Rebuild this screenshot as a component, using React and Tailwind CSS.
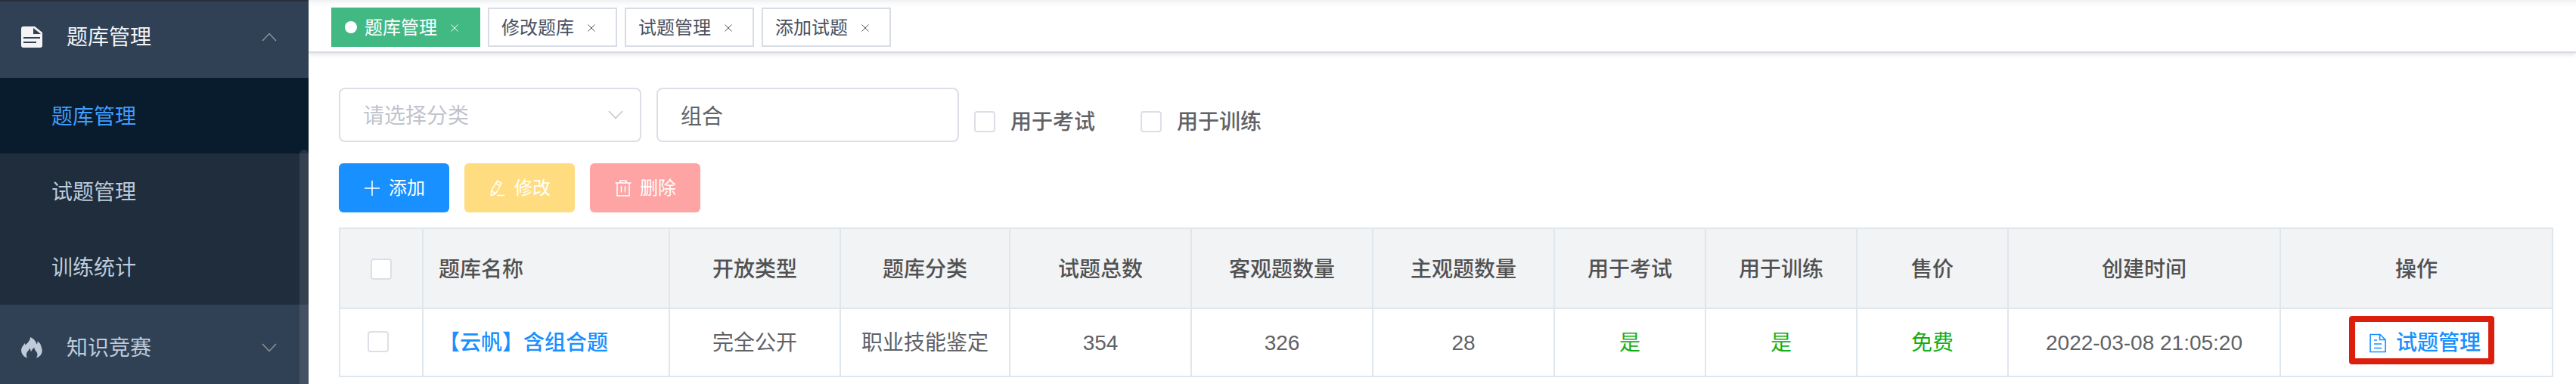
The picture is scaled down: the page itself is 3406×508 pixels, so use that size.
import { useState } from 'react';

const subMenus = ['题库管理', '试题管理', '训练统计'];

const tags = ['题库管理', '修改题库', '试题管理', '添加试题'];

const columns = [
    { title: '开放类型', key: 'openType', col: 'w-[226px]' },
    { title: '题库分类', key: 'category', col: 'w-[224px]' },
    { title: '试题总数', key: 'total', col: 'w-[240px]' },
    { title: '客观题数量', key: 'objective', col: 'w-[240px]' },
    { title: '主观题数量', key: 'subjective', col: 'w-[240px]' },
    { title: '用于考试', key: 'isExam', col: 'w-[200px]', green: true },
    { title: '用于训练', key: 'isTrain', col: 'w-[200px]', green: true },
    { title: '售价', key: 'price', col: 'w-[200px]', green: true },
    { title: '创建时间', key: 'createTime', col: 'w-[360px]' },
];

const rows = [
    {
        id: 1,
        name: '【云帆】含组合题',
        openType: '完全公开',
        category: '职业技能鉴定',
        total: '354',
        objective: '326',
        subjective: '28',
        isExam: '是',
        isTrain: '是',
        price: '免费',
        createTime: '2022-03-08 21:05:20',
    },
];

const checkboxClass = "appearance-none block shrink-0 w-7 h-7 bg-white border-2 border-[#dcdfe6] rounded checked:bg-[#1890ff] checked:border-[#1890ff]";

const DocIcon = () => (
    <svg className="w-7 h-7" viewBox="0 0 28 28" fill="currentColor">
        <path fillRule="evenodd" d="M3 0H18L28 8V25a3 3 0 0 1-3 3H3a3 3 0 0 1-3-3V3a3 3 0 0 1 3-3ZM16 2V10H26ZM3 14V16H25V14ZM3 20V22H20V20Z" />
    </svg>
);

const FlameIcon = () => (
    <svg className="w-7 h-7" viewBox="0 0 28 28" fill="currentColor">
        <path d="M12 0C16 1.500 19.500 5 20.500 9.500C21.500 8.500 21.800 7 21.500 5.300C24 7 26 9.500 26.500 12.500C29 18 28 25 20 27.500C22.500 23.500 21.500 20.500 19 18C18.300 17 17.500 15.500 17.500 14C16 14.500 14.500 16 14 17.500C13.700 18.200 13.300 18.700 12.500 19C12.500 17.500 12.300 16 11.500 14.500C10.500 17.500 7.500 19 7 22C6.800 24 7 25.500 8 27.500C2 25.500-.500 20.500 .200 16C.700 12.500 3.500 11 4.500 8C5 9 5.300 9.500 5.500 10.500C8 8 12 5 12 0Z" />
    </svg>
);

const Chevron = ({ className }) => (
    <svg className={className} viewBox="0 0 20 12" fill="none" stroke="currentColor" strokeWidth="1.500">
        <path d="M1 1L10 10.500L19 1" />
    </svg>
);

const CloseIcon = () => (
    <svg className="w-2.5 h-2.5" viewBox="0 0 10 10" fill="none" stroke="currentColor" strokeWidth="1">
        <path d="M.5 .5L9.500 9.500M9.500 .5L.5 9.500" />
    </svg>
);

const PlusIcon = () => (
    <svg className="w-6 h-6" viewBox="0 0 24 24" fill="none" stroke="currentColor" strokeWidth="1.500">
        <path d="M12 2V22M2 12H22" />
    </svg>
);

const EditIcon = () => (
    <svg className="w-6 h-6" viewBox="0 0 24 24" fill="none" stroke="currentColor" strokeWidth="1.500" strokeLinejoin="round">
        <path d="M11.500 2.200L17.200 5.500L9.500 19L3.200 21.800L3.500 15.500ZM9.500 5.500L15.400 9M3.500 15.500L9.500 19M11 21.500H21.500" />
    </svg>
);

const TrashIcon = () => (
    <svg className="w-6 h-6" viewBox="0 0 24 24" fill="none" stroke="currentColor" strokeWidth="1.500">
        <path d="M1.500 5H22.500M8 5V2H16V5M4 5V22H20V5M9.500 9V17.500M14.500 9V17.500" />
    </svg>
);

const PaperIcon = () => (
    <svg className="w-7 h-7" viewBox="0 0 28 28" fill="none" stroke="currentColor" strokeWidth="1.700">
        <path d="M4 2.500H17L24 9.500V25.500H4ZM16.500 2.500V9.500H24M9 10H13M9 15H19M9 20.500H19" />
    </svg>
);

const Sidebar = () => (
    <aside className="relative w-[408px] shrink-0 flex flex-col bg-[#304156] border-t-2 border-[#2b2f3a] text-[28px] text-[#bfcbd9]">
        <button className="h-[101px] pb-2 pl-7 pr-[42px] flex items-center text-[#f4f4f5]">
            <DocIcon />
            <span className="ml-8 pt-0.5 flex-1 text-left">题库管理</span>
            <Chevron className="w-5 h-3 rotate-180 text-[#909399]" />
        </button>

        <nav className="flex flex-col bg-[#1f2d3d]">
            {subMenus.map((item, i) => (
                <a href="#" key={i} className={i === 0 ? "h-[100px] pt-1 pl-[68px] flex items-center bg-[#081c2d] text-[#409eff]" : "h-[100px] pt-1 pl-[68px] flex items-center"}>
                    {item}
                </a>
            ))}
        </nav>

        <button className="h-[105px] pt-2 pl-7 pr-[42px] flex items-center">
            <FlameIcon />
            <span className="ml-8 pt-0.5 flex-1 text-left">知识竞赛</span>
            <Chevron className="w-5 h-3 text-[#909399]" />
        </button>

        {/* scrollbar thumb */}
        <div className="absolute right-0 top-[196px] bottom-0 w-3 rounded-t-full bg-[#909399]/20"></div>
    </aside>
);

const TagsView = () => (
    <div className="h-[70px] pt-2 pl-[30px] flex gap-2.5 border-t-2 border-t-[#f0f3f3] border-b-2 border-b-[#d8dce5] shadow-[0_2px_6px_rgba(0,0,0,0.12),inset_0_6px_8px_-6px_rgba(0,21,41,0.08)]">
        {tags.map((tag, i) => (
            <div key={i} className={i === 0 ? "h-[52px] px-4 flex items-center border-2 border-[#42b983] bg-[#42b983] text-white text-2xl" : "h-[52px] px-4 flex items-center border-2 border-[#d8dce5] text-[#495060] text-2xl"}>
                {i === 0 && <span className="w-4 h-4 mr-2.5 rounded-full bg-white"></span>}
                <a href="#" className="pt-0.5">{tag}</a>
                <button aria-label="关闭" className="w-8 h-8 ml-[7px] pt-0.5 flex items-center justify-center">
                    <CloseIcon />
                </button>
            </div>
        ))}
    </div>
);

const App = () => {

    const [keyword, setKeyword] = useState('组合');

    return (
        <div className="flex min-h-screen bg-white font-['Liberation_Sans','Noto_Sans_CJK_SC',sans-serif]">
            <Sidebar />

            <main className="flex-1 min-w-0">
                <TagsView />

                <div className="pt-[46px] pl-10 pr-[30px]">

                    {/* filters */}
                    <div className="flex items-center text-[28px] text-[#606266]">
                        <div className="relative">
                            <select aria-label="分类" className="appearance-none block w-[400px] h-[72px] pt-1 px-[30px] border-2 border-[#dcdfe6] rounded-lg bg-white text-[#c0c4cc]">
                                <option>请选择分类</option>
                            </select>
                            <Chevron className="absolute right-6 top-[30px] w-5 h-3 text-[#c0c4cc] pointer-events-none" />
                        </div>
                        <input aria-label="题库名称" type="text" value={keyword} onChange={(e) => setKeyword(e.target.value)} className="w-[400px] h-[72px] ml-5 px-[30px] border-2 border-[#dcdfe6] rounded-lg" />
                        <div className="ml-5 pt-[18px] flex gap-[60px] font-medium">
                            <label className="flex items-center gap-5">
                                <input type="checkbox" className={checkboxClass} />
                                <span className="pt-0.5">用于考试</span>
                            </label>
                            <label className="flex items-center gap-5">
                                <input type="checkbox" className={checkboxClass} />
                                <span className="pt-0.5">用于训练</span>
                            </label>
                        </div>
                    </div>

                    {/* actions */}
                    <div className="mt-7 flex gap-5 text-2xl text-white">
                        <button className="h-[65px] px-8 flex items-center gap-2.5 rounded-md bg-[#1890ff]">
                            <PlusIcon />
                            添加
                        </button>
                        <button disabled className="h-[65px] px-8 flex items-center gap-2.5 rounded-md bg-[#ffdc80]">
                            <EditIcon />
                            修改
                        </button>
                        <button disabled className="h-[65px] px-8 flex items-center gap-2.5 rounded-md bg-[#ffa4a4]">
                            <TrashIcon />
                            删除
                        </button>
                    </div>

                    {/* list */}
                    <table className="mt-5 w-full table-fixed border-separate border-spacing-0 border-t-2 border-l-2 border-[#dfe6ec] text-[28px] text-[#606266]">
                        <colgroup>
                            <col className="w-[110px]" />
                            <col />
                            {columns.map((c) => <col key={c.key} className={c.col} />)}
                            <col className="w-[360px]" />
                        </colgroup>
                        <thead>
                            <tr className="h-[106px] bg-[#f1f3f5] text-[#515151]">
                                <th className="pt-0.5 border-r-2 border-b-2 border-[#dfe6ec]">
                                    <input type="checkbox" aria-label="全选" className={`${checkboxClass} mx-auto`} />
                                </th>
                                <th className="pt-1 px-5 border-r-2 border-b-2 border-[#dfe6ec] text-left font-medium">题库名称</th>
                                {columns.map((c) => (
                                    <th key={c.key} className="pt-1 border-r-2 border-b-2 border-[#dfe6ec] font-medium">{c.title}</th>
                                ))}
                                <th className="pt-1 border-r-2 border-b-2 border-[#dfe6ec] font-medium">操作</th>
                            </tr>
                        </thead>
                        <tbody>
                            {rows.map((row) => (
                                <tr key={row.id} className="h-[90px] text-center">
                                    <td className="pr-2 pb-0.5 border-r-2 border-b-2 border-[#dfe6ec]">
                                        <input type="checkbox" aria-label={row.name} className={`${checkboxClass} mx-auto`} />
                                    </td>
                                    <td className="pt-0.5 px-5 border-r-2 border-b-2 border-[#dfe6ec] text-left">
                                        <a href="#" className="font-medium text-[#1890ff]">{row.name}</a>
                                    </td>
                                    {columns.map((c) => (
                                        <td key={c.key} className={c.green ? "pt-0.5 border-r-2 border-b-2 border-[#dfe6ec] text-[#13ae13]" : "pt-0.5 border-r-2 border-b-2 border-[#dfe6ec]"}>{row[c.key]}</td>
                                    ))}
                                    <td className="pl-3.5 pb-1.5 border-r-2 border-b-2 border-[#dfe6ec]">
                                        <a href="#" className="mx-auto w-[192px] h-16 pl-4 pt-2 flex items-center gap-2.5 border-8 border-[#db1f0c] rounded font-medium text-[#1890ff]">
                                            <PaperIcon />
                                            试题管理
                                        </a>
                                    </td>
                                </tr>
                            ))}
                        </tbody>
                    </table>
                </div>
            </main>
        </div>
    );
};

export default App;
